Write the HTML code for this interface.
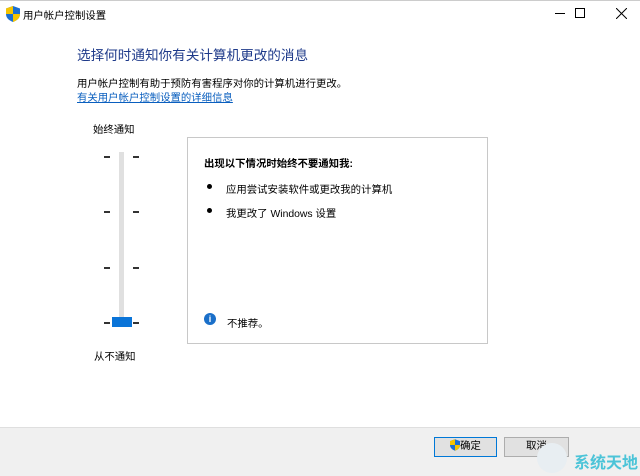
<!DOCTYPE html><html><head><meta charset="utf-8"><style>
body{margin:0;width:640px;height:475px;background:#fff;position:relative;overflow:hidden;font-family:"Liberation Sans","Noto Sans CJK SC",sans-serif;font-size:10.4px;color:#000}
.a{position:absolute;white-space:nowrap}
.d{position:absolute;width:6px;height:2px;background:#333}
.b{position:absolute;width:5px;height:5px;border-radius:50%;background:#000}
</style></head><body>
<div class="a" style="left:0;top:0;width:640px;height:1px;background:#ccc"></div>
<svg class="a" style="left:6px;top:6px" width="14" height="16" viewBox="0 0 14 16"><path d="M7 0L0 2.5V8c0 4 3 6.5 7 8 4-1.5 7-4 7-8V2.5z" fill="#1c6fd1"/><path d="M7 0v8H0V2.5zM7 8h7c0 4-3 6.5-7 8z" fill="#f5c400"/></svg>
<div class="a" style="left:23px;top:7px">用户帐户控制设置</div>
<div class="a" style="left:555px;top:13px;width:10px;height:1px;background:#000"></div>
<div class="a" style="left:575px;top:8px;width:8px;height:8px;border:1px solid #000"></div>
<svg class="a" style="left:616px;top:8px" width="11" height="11"><path d="M0 0L11 11M11 0L0 11" stroke="#000"/></svg>
<div class="a" style="left:77px;top:44px;font-size:13.6px;color:#1e3a8a">选择何时通知你有关计算机更改的消息</div>
<div class="a" style="left:77px;top:75px">用户帐户控制有助于预防有害程序对你的计算机进行更改。</div>
<div class="a" style="left:77px;top:89px;color:#0a5fbf;text-decoration:underline">有关用户帐户控制设置的详细信息</div>
<div class="a" style="left:93px;top:121px">始终通知</div>
<div class="a" style="left:94px;top:348px">从不通知</div>
<div class="a" style="left:119px;top:152px;width:5px;height:170px;background:#e0e0e0"></div>
<div class="d" style="left:104px;top:156px"></div><div class="d" style="left:133px;top:156px"></div>
<div class="d" style="left:104px;top:211px"></div><div class="d" style="left:133px;top:211px"></div>
<div class="d" style="left:104px;top:267px"></div><div class="d" style="left:133px;top:267px"></div>
<div class="d" style="left:104px;top:322px"></div><div class="d" style="left:133px;top:322px"></div>
<div class="a" style="left:112px;top:317px;width:20px;height:10px;background:#0a74d8"></div>
<div class="a" style="left:187px;top:137px;width:299px;height:205px;border:1px solid #c8c8c8"></div>
<div class="a" style="left:204px;top:155px;font-weight:bold">出现以下情况时始终不要通知我:</div>
<div class="b" style="left:207px;top:184px"></div>
<div class="a" style="left:226px;top:181px">应用尝试安装软件或更改我的计算机</div>
<div class="b" style="left:207px;top:208px"></div>
<div class="a" style="left:226px;top:205px">我更改了 Windows 设置</div>
<div class="a" style="left:204px;top:313px;width:12px;height:12px;border-radius:50%;background:#1a6fc9;color:#fff;font-size:9px;text-align:center;line-height:12px;font-weight:bold">i</div>
<div class="a" style="left:227px;top:315px">不推荐。</div>
<div class="a" style="left:0;top:427px;width:640px;height:48px;background:#f0f0f0;border-top:1px solid #dfdfdf"></div>
<div class="a" style="left:434px;top:437px;width:61px;height:18px;background:#e1e1e1;border:1px solid #0078d7;text-align:center;line-height:18px"><svg width="10" height="12" viewBox="0 0 14 16" style="vertical-align:-2px"><path d="M7 0L0 2.5V8c0 4 3 6.5 7 8 4-1.5 7-4 7-8V2.5z" fill="#1c6fd1"/><path d="M7 0v8H0V2.5zM7 8h7c0 4-3 6.5-7 8z" fill="#f5c400"/></svg>确定</div>
<div class="a" style="left:504px;top:437px;width:63px;height:18px;background:#e1e1e1;border:1px solid #adadad;text-align:center;line-height:18px">取消</div>
<div class="a" style="left:537px;top:443px;width:30px;height:30px;border-radius:50%;background:#e8eef2"></div>
<div class="a" style="left:574px;top:449px;font-size:16px;font-weight:bold;color:#4cc4d8">系统天地</div>
</body></html>
